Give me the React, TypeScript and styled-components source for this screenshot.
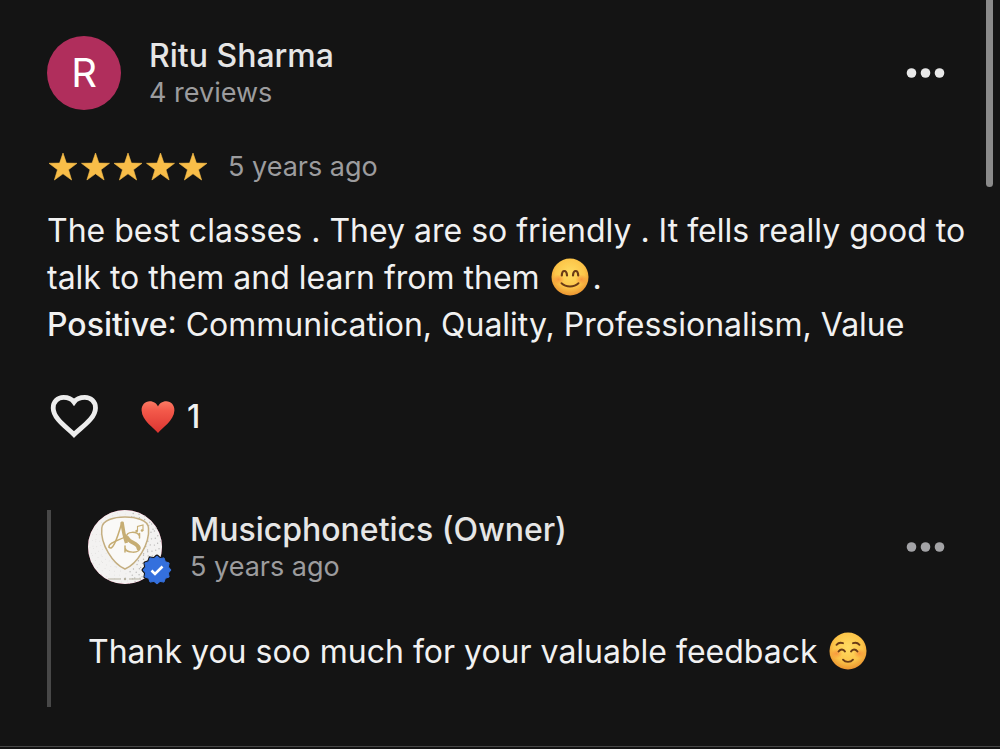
import React from "react";
import styled, { createGlobalStyle } from "styled-components";

const GlobalStyle = createGlobalStyle`
  *, *::before, *::after { box-sizing: border-box; }
  body {
    margin: 0;
    background: #141414;
    color: #f1f1f1;
    font-family: Inter, "Liberation Sans", sans-serif;
    -webkit-font-smoothing: antialiased;
  }
`;

const Page = styled.main`
  position: relative;
  overflow: hidden;
`;

const ScrollThumb = styled.div`
  position: absolute;
  top: -8px;
  right: 7px;
  width: 7px;
  height: 195px;
  border-radius: 4px;
  background: #8b8b8b;
`;

const Review = styled.article`
  padding: 36px 30px 39px 47px;
  border-bottom: 1px solid #484848;
  margin-bottom: 2px;
`;

const Header = styled.header`
  display: flex;
  align-items: center;
  gap: 28px;
  padding-right: 25px;
`;

const Avatar = styled.div`
  position: relative;
  flex: none;
  display: flex;
  align-items: center;
  justify-content: center;
  width: 74px;
  height: 74px;
  border-radius: 50%;
  background: #b02e5c;
  color: #ffffff;
  font-size: 40px;
  line-height: 74px;
`;

const Badge = styled.svg`
  position: absolute;
  right: -11px;
  bottom: -2px;
`;

const Identity = styled.div`
  flex: 1;
  min-width: 0;
`;

const Name = styled.h2`
  margin: 0;
  font-size: 32px;
  font-weight: 500;
  line-height: 39px;
  color: #e6e6e6;
`;

const Meta = styled.p`
  margin: 0;
  font-size: 27px;
  line-height: 35px;
  color: #9c9c9e;
`;

const IconButton = styled.button`
  flex: none;
  display: flex;
  padding: 0;
  border: 0;
  background: none;
  color: inherit;
  cursor: pointer;
`;

const Rating = styled.div`
  display: flex;
  align-items: center;
  gap: 19px;
  margin-top: 39px;
`;

const Text = styled.p<{ $top: number }>`
  margin: ${(p) => p.$top}px 0 0;
  font-size: 32px;
  line-height: 47px;

  strong { font-weight: 500; }
`;

const Emoji = styled.svg`
  width: 38px;
  height: 38px;
  margin: 0 4px 0 2px;
  vertical-align: -7px;
`;

const Actions = styled.div`
  display: flex;
  align-items: center;
  gap: 40px;
  margin-top: 45px;
`;

const Count = styled.span`
  display: flex;
  align-items: center;
  gap: 12px;
  font-size: 32px;
  font-weight: 500;
  line-height: 47px;
`;

const Reply = styled.section`
  margin-top: 70px;
  padding: 0 0 32px 37px;
  border-left: 4px solid #484848;
`;

const Dots = ({ color }: { color: string }) => (
  <svg width="39" height="10" viewBox="0 0 39 10" fill={color} aria-hidden="true">
    <circle cx="5.5" cy="5" r="4.8" />
    <circle cx="19.5" cy="5" r="4.8" />
    <circle cx="33.5" cy="5" r="4.8" />
  </svg>
);

const Stars = () => (
  <svg width="162" height="30" viewBox="0 0 162 30" fill="#f8bd48" role="img" aria-label="5 out of 5 stars">
    {[0, 1, 2, 3, 4].map((i) => (
      <path
        key={i}
        transform={`translate(${2 + i * 32.5} 1)`}
        d="M14 0 17.4 10.1 28 10.3 19.5 16.7 22.6 27 14 20.8 5.4 27 8.5 16.7 0 10.3 10.6 10.1Z"
        stroke="#f8bd48"
        strokeWidth="0.6"
        strokeLinejoin="round"
      />
    ))}
  </svg>
);

const HeartOutline = () => (
  <svg width="54" height="46" viewBox="0 0 54 46" fill="none" aria-hidden="true">
    <path
      d="M27 40.5C20 33.5 6.200 24.500 6.200 13.900C6.200 7.700 10.800 3.400 16.500 3.400C21 3.400 25 5.200 27 8C29 5.200 33 3.400 37.900 3.400C43.800 3.400 48.500 7.700 48.500 13.900C48.500 24.500 34 33.500 27 40.500Z"
      stroke="#ededed"
      strokeWidth="4.800"
    />
  </svg>
);

const RedHeart = () => (
  <svg width="34" height="34" viewBox="0 0 34 34" role="img" aria-label="Love reactions">
    <defs>
      <linearGradient id="heart" x1="0" y1="0" x2="0" y2="1">
        <stop offset="0" stopColor="#fb7a63" />
        <stop offset="0.3" stopColor="#f3594a" />
        <stop offset="1" stopColor="#dc3430" />
      </linearGradient>
    </defs>
    <path
      d="M17 33C13 28 1 20.500 .6 10.500C.4 5 4 1.200 8.800 1.200C12.800 1.200 15.800 3.500 17 6.500C18.200 3.500 21.200 1.200 25.200 1.200C30 1.200 33.600 5 33.400 10.500C33 20.500 21 28 17 33Z"
      fill="url(#heart)"
    />
  </svg>
);

const FaceFill = ({ id }: { id: string }) => (
  <>
    <defs>
      <radialGradient id={id} cx="0.5" cy="0.4" r="0.6">
        <stop offset="0" stopColor="#ffdc62" />
        <stop offset="0.65" stopColor="#fcc549" />
        <stop offset="1" stopColor="#eb9430" />
      </radialGradient>
      <radialGradient id={`${id}-blush`}>
        <stop offset="0" stopColor="#f4672f" stopOpacity="0.5" />
        <stop offset="1" stopColor="#f4672f" stopOpacity="0" />
      </radialGradient>
    </defs>
    <circle cx="19" cy="19" r="18.500" fill={`url(#${id})`} />
    <ellipse cx="7.500" cy="21.500" rx="6" ry="5" fill={`url(#${id}-blush)`} />
    <ellipse cx="30.500" cy="21.500" rx="6" ry="5" fill={`url(#${id}-blush)`} />
  </>
);

const SmilingFace = () => (
  <Emoji viewBox="0 0 38 38" role="img" aria-label="Smiling face with smiling eyes">
    <FaceFill id="smile" />
    <g fill="none" stroke="#6a3b16" strokeWidth="2.200" strokeLinecap="round">
      <path d="M10.800 17.500C11 11.500 15.600 11.500 16 17.500" />
      <path d="M22 17.500C22.400 11.500 27 11.500 27.200 17.500" />
      <path d="M10.500 25.200C15 29.500 23 29.500 27.500 25.200" strokeWidth="1.900" />
    </g>
  </Emoji>
);

const RelaxedFace = () => (
  <Emoji viewBox="0 0 38 38" role="img" aria-label="Smiling face">
    <FaceFill id="relaxed" />
    <g fill="none" stroke="#6a3b16" strokeWidth="1.900" strokeLinecap="round">
      <path d="M7.500 12.800C9.500 10.500 12 10.500 14 11.200" />
      <path d="M24 11.200C26 10.500 28.500 10.500 30.500 12.800" />
      <path d="M9.500 19.500C11.500 16.800 14.500 16.800 16 19.500" />
      <path d="M22 19.500C23.500 16.800 26.500 16.800 28.500 19.500" />
      <path d="M14 27.700C16.500 30.600 21.500 30.600 24 27.700" />
    </g>
  </Emoji>
);

const speckles = Array.from({ length: 230 }, (_, i) => {
  const angle = i * 2.39996;
  const radius = 37 * Math.sqrt(((i * 37) % 230) / 230);
  return { x: 37 + radius * Math.cos(angle), y: 37 + radius * Math.sin(angle), dark: Math.cos(angle) > 0.2 };
});

const OwnerLogo = () => (
  <svg width="74" height="74" viewBox="0 0 74 74" aria-hidden="true">
    <circle cx="37" cy="37" r="37" fill="#f3f2f1" />
    {speckles.map((s, i) => (
      <circle key={i} cx={s.x} cy={s.y} r={s.dark ? 0.7 : 0.4} fill={s.dark ? "#b9b8b7" : "#d0cfce"} />
    ))}
    <path
      d="M37 7C48 7 60 10 60.500 18C62 34 49 54 37 59C25 54 12 34 13.800 18C14.500 10 26 7 37 7Z"
      fill="#faf9f7"
      stroke="#c4ae80"
      strokeWidth="1.500"
    />
    <g fill="none" stroke="#c6ad73" strokeLinecap="round">
      <path d="M21 37C24 41 28 33 34 12" strokeWidth="1.500" />
      <path d="M34 12C35 20 36.500 27 38.500 33" strokeWidth="3.400" strokeLinecap="butt" />
      <path d="M21 37C20 33 31 30 37 27" strokeWidth="1.300" />
      <path d="M51.500 28V23.500M51.500 26C49 21 38.500 21 38.500 27C38.500 33 52.500 33 52 38C51 44 38 43 37 38M37 36V42" strokeWidth="1.500" />
      <path d="M39.500 28C42 33.500 50 32.500 50.500 38.500" strokeWidth="3.800" />
      <path d="M49.500 21V16.500L55 15V20.500" strokeWidth="1.100" />
    </g>
    <g fill="#c6ad73">
      <circle cx="48.600" cy="21" r="1.300" />
      <circle cx="54" cy="20.500" r="1.300" />
    </g>
    <path d="M20 69H33M41 69H53" stroke="#b5b09f" strokeWidth="1" />
    <circle cx="37" cy="69" r="1.200" fill="#b5b09f" />
  </svg>
);

const burst = Array.from({ length: 24 }, (_, i) => {
  const angle = (i * Math.PI) / 12 - Math.PI / 2;
  const radius = i % 2 ? 11.8 : 14;
  return `${16 + radius * Math.cos(angle)},${16 + radius * Math.sin(angle)}`;
}).join(" ");

const VerifiedBadge = () => (
  <Badge width="32" height="32" viewBox="0 0 32 32" role="img" aria-label="Verified">
    <polygon points={burst} fill="#3470dd" stroke="#141414" strokeWidth="3" strokeLinejoin="round" />
    <polygon points={burst} fill="#3470dd" stroke="#3470dd" strokeWidth="1" strokeLinejoin="round" />
    <path d="M10.500 16.500 14 20 21.500 12.500" fill="none" stroke="#ffffff" strokeWidth="2.600" />
  </Badge>
);

export default function App() {
  return (
    <>
      <GlobalStyle />
      <Page>
        <Review>
          <Header>
            <Avatar aria-hidden="true">R</Avatar>
            <Identity>
              <Name>Ritu Sharma</Name>
              <Meta>4 reviews</Meta>
            </Identity>
            <IconButton type="button" aria-label="Review options">
              <Dots color="#e8e8e8" />
            </IconButton>
          </Header>
          <Rating>
            <Stars />
            <Meta>5 years ago</Meta>
          </Rating>
          <Text $top={23}>
            The best classes . They are so friendly . It fells really good to talk to them and learn from
            them <SmilingFace />.
            <br />
            <strong>Positive</strong>: Communication, Quality, Professionalism, Value
          </Text>
          <Actions>
            <IconButton type="button" aria-label="Like this review">
              <HeartOutline />
            </IconButton>
            <Count>
              <RedHeart />1
            </Count>
          </Actions>
          <Reply>
            <Header>
              <Avatar>
                <OwnerLogo />
                <VerifiedBadge />
              </Avatar>
              <Identity>
                <Name>Musicphonetics (Owner)</Name>
                <Meta>5 years ago</Meta>
              </Identity>
              <IconButton type="button" aria-label="Reply options">
                <Dots color="#a3a3a6" />
              </IconButton>
            </Header>
            <Text $top={44}>
              Thank you soo much for your valuable feedback <RelaxedFace />
            </Text>
          </Reply>
        </Review>
        <ScrollThumb />
      </Page>
    </>
  );
}
